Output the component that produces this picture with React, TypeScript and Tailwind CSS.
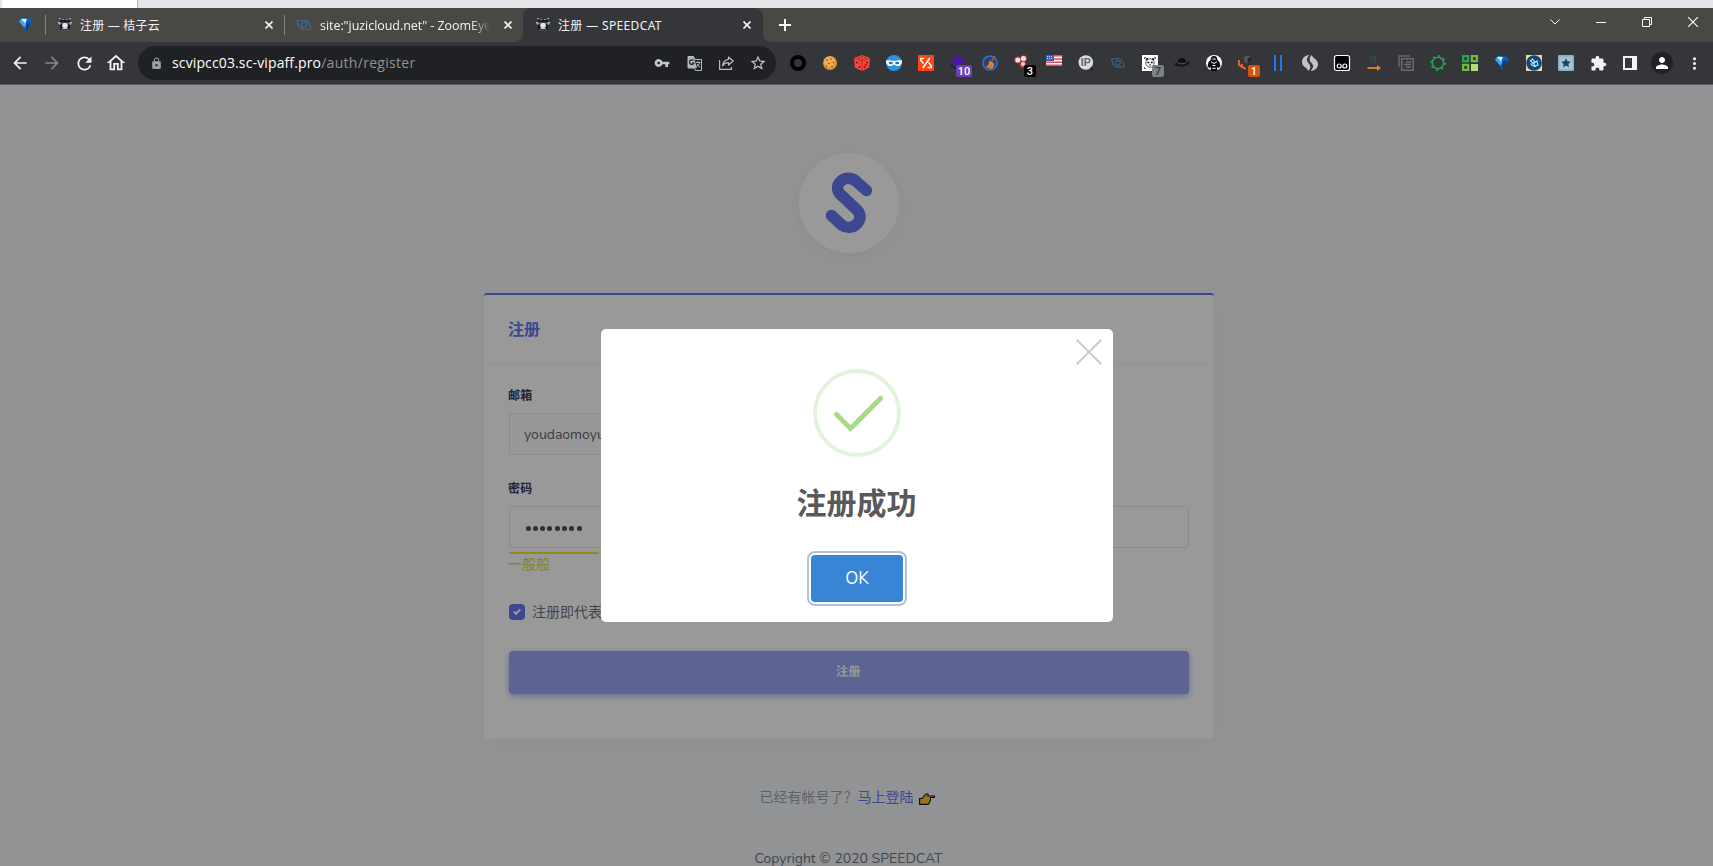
import type { ReactNode } from "react";
import {
  MdArrowBack,
  MdArrowForward,
  MdRefresh,
  MdOutlineHome,
  MdLock,
  MdVpnKey,
  MdStarBorder,
  MdExtension,
  MdPerson,
  MdMoreVert,
} from "react-icons/md";

const Raccoon = () => (
  <svg width="16" height="16" viewBox="0 0 16 16">
    <path d="M3 3h10l.5 4.500-1 5.500h-9l-1-5.500z" fill="#1d1c22" />
    <path d="M2 1h2v1.200H2zM5.500 2h1.500v1H5.500zM9 2h1.500v1H9zM12 1h2v1.200h-2z" fill="#9d98b0" />
    <path d="M.5 5h2.500l1 2-1.500 1zM15.500 5H13l-1 2 1.500 1z" fill="#b5b2bb" />
    <path d="M4 5.500h2.500v1H4zM9.500 5.500H12v1H9.500z" fill="#8a8790" />
    <ellipse cx="8" cy="8.500" rx="2.800" ry="2.800" fill="#e6e6ea" />
    <path d="M6.300 10.500h3.400L11 12H5z" fill="#c9c8ce" />
    <path d="M4 12.500h8v1H4z" fill="#5a5960" />
  </svg>
);

const Gem = () => (
  <svg width="16" height="16" viewBox="0 0 16 16">
    <path d="M1 4.500 3.500 1.500h9L15 4.500 10 10.500 8.500 15h-1L6 10.500z" fill="#0a5cc0" />
    <path d="M1 4.500 3.500 1.500H8V9L6 10.500z" fill="#3aa6f4" />
    <path d="M3.500 2h5.500L7 6.500z" fill="#e6f6ff" />
    <path d="M8.500 8 12.500 4.500 10 10.500 8.500 15z" fill="#063678" />
  </svg>
);

const Orbit = () => (
  <svg width="16" height="16" viewBox="0 0 16 16" fill="none" stroke="#3a6d99" strokeLinecap="round">
    <path d="M1.500 4C4 3 9 2.800 11.500 4.300 13.500 5.500 14 8 15 12M14.500 12C12 13 7 13.200 4.500 11.700 2.500 10.500 2 8 1 4" strokeWidth="1.100" />
    <circle cx="8" cy="8" r="2.700" strokeWidth="1.100" />
  </svg>
);

const Badge = ({ text, tone }: { text: string; tone: string }) => (
  <span
    className={`absolute left-[18px] top-[18px] flex h-3 w-3 items-center justify-center rounded-[2px] font-['Roboto',sans-serif] text-[11px] font-medium leading-none ${tone}`}
  >
    {text}
  </span>
);

const Ext = ({ children, badge }: { children: ReactNode; badge?: ReactNode }) => (
  <div className="relative flex h-8 w-8 shrink-0 items-center justify-center">
    {children}
    {badge}
  </div>
);

const Svg = ({ children }: { children: ReactNode }) => (
  <svg width="16" height="16" viewBox="0 0 16 16" className="overflow-visible">
    {children}
  </svg>
);

function Extensions() {
  return (
    <div className="ml-[6px] flex items-center">
      <Ext>
        <Svg><circle cx="8" cy="8" r="6" fill="none" stroke="#000" strokeWidth="4" /></Svg>
      </Ext>
      <Ext>
        <Svg>
          <circle cx="8" cy="8" r="7" fill="#dc9437" />
          <circle cx="7.500" cy="7" r="5.600" fill="#efae56" />
          <g fill="#7d4514">
            <circle cx="5" cy="5" r=".8" /><circle cx="9" cy="4" r=".7" /><circle cx="11.500" cy="7.500" r=".8" />
            <circle cx="7" cy="8.500" r=".8" /><circle cx="10" cy="11.500" r=".8" /><circle cx="4.500" cy="11" r=".7" />
          </g>
        </Svg>
      </Ext>
      <Ext>
        <Svg>
          <path d="M8 0l8 3-.8 9.500L8 16 .8 12.500 0 3z" fill="#f5483a" />
          <path d="M0 3l8 3L16 3M8 6V16" stroke="#b5261f" strokeWidth=".8" fill="none" />
          <g fill="#6e120e">
            <circle cx="5" cy="2.800" r=".7" /><circle cx="8" cy="1.800" r=".7" /><circle cx="11" cy="2.800" r=".7" /><circle cx="8" cy="4.100" r=".7" />
            <circle cx="3" cy="7.500" r=".9" /><circle cx="5.500" cy="12" r=".9" /><circle cx="10.500" cy="12" r=".9" /><circle cx="13" cy="7.500" r=".9" /><circle cx="11.800" cy="9.800" r=".9" />
          </g>
        </Svg>
      </Ext>
      <Ext>
        <Svg>
          <circle cx="8" cy="8" r="8" fill="#2b93e4" />
          <path d="M0 5.500c3-.6 5 .3 8 .3s5-.9 8-.3c0 4-2 5.500-4.500 5.500-2 0-2.500-1.500-3.500-1.500S6.500 11 4.500 11C2 11 0 9.500 0 5.500z" fill="#fff" />
          <ellipse cx="4.800" cy="8" rx="2" ry="1.200" fill="#2b6ea8" /><ellipse cx="11.200" cy="8" rx="2" ry="1.200" fill="#2b6ea8" />
        </Svg>
      </Ext>
      <Ext>
        <Svg>
          <rect width="16" height="16" rx="1" fill="#ff4713" />
          <path d="M6.200 3.500H2.800v2L5.500 8.500M11.800 3 4.800 13M10.500 7.500l2.700 3v2H9.500" stroke="#fff" strokeWidth="1.500" fill="none" />
        </Svg>
      </Ext>
      <Ext badge={<span className="absolute left-[14px] top-[18px] flex h-3 w-4 items-center justify-center rounded-[2px] bg-[#6b3fb8] font-['Roboto',sans-serif] text-[11px] font-medium leading-none text-white">10</span>}>
        <Svg>
          <path d="M8 0l7.500 6L8 11 .5 6z" fill="#4a16a8" /><path d="M.5 9L8 14l7.500-5v2L8 16 .5 11z" fill="#2c0a6e" />
        </Svg>
      </Ext>
      <Ext>
        <Svg>
          <circle cx="8" cy="8" r="7" fill="#35405a" stroke="#2377d8" strokeWidth="1.600" />
          <path d="M12.300 .5l1.200.8-3 5.200L9 5.700z" fill="#a85a24" />
          <path d="M7.500 5.500l4.500 3c0 3-1 5-3 5.500L3.500 12c2-.8 3.500-3 4-6.500z" fill="#d98a4a" />
          <path d="M7.500 8.500 6 12M9.500 9.500 8 13" stroke="#a5602a" strokeWidth=".8" />
        </Svg>
      </Ext>
      <Ext badge={<Badge text="3" tone="bg-black text-white" />}>
        <Svg>
          <circle cx="3.800" cy="5" r="3.600" fill="#a83238" /><circle cx="9.500" cy="3.500" r="3.600" fill="#a83238" /><circle cx="9" cy="9.500" r="3.600" fill="#a83238" />
          <circle cx="3.800" cy="5" r="2.600" fill="#f2dede" /><circle cx="9.500" cy="3.500" r="2.600" fill="#f2dede" /><circle cx="9" cy="9" r="2.200" fill="#e7c6c6" />
        </Svg>
      </Ext>
      <Ext>
        <Svg>
          <rect width="16" height="11" fill="#f4f4f4" />
          <path d="M0 .8h16M0 4h16M0 7.200h16M0 10.300h16" stroke="#e0504e" strokeWidth="1.400" />
          <rect width="8" height="6" fill="#3b5fb5" />
          <path d="M1 1.500h6M1 3.500h6" stroke="#cbd6f0" strokeDasharray="1 1" />
        </Svg>
      </Ext>
      <Ext>
        <Svg>
          <circle cx="7.800" cy="7.500" r="7.300" fill="#dcdcdc" /><path d="M12.500 12.500l2.500 3" stroke="#222" strokeWidth="1.500" />
          <text x="7.800" y="11.300" textAnchor="middle" fontSize="10.500" fontWeight="700" fontFamily="Liberation Sans, sans-serif" fill="#666">IP</text>
        </Svg>
      </Ext>
      <Ext><Svg><g transform="scale(.9) translate(.8 .8)"><Orbit /></g></Svg></Ext>
      <Ext badge={<Badge text="7" tone="bg-[#7c8085] text-[#3a3b3e]" />}>
        <Svg>
          <rect width="16" height="16" fill="#fff" />
          <path d="M2.500 4V2.500H4M12 2.500h1.500V4M2.500 12v1.500H4" stroke="#333" fill="none" strokeWidth=".8" />
          <circle cx="5" cy="4.200" r="1.300" fill="#222" /><circle cx="11" cy="4.200" r="1.300" fill="#222" />
          <circle cx="8" cy="8" r="4.200" fill="#fff" stroke="#444" strokeWidth=".9" />
          <path d="M5.300 7.500h2M8.700 7.500h2" stroke="#111" strokeWidth="1.700" /><path d="M7 10h2" stroke="#222" />
        </Svg>
      </Ext>
      <Ext>
        <Svg>
          <path d="M4 8c0-3 .8-5 2.500-5L8 3.600 9.500 3C11 3 12 5 12 8z" fill="#101010" />
          <path d="M0 9c1-.8 3-.6 4-1.500h8c1-.3 3-1 4-1.200-.5 3-4 5.200-8 5.200S1 10.800 0 9z" fill="#161616" />
          <path d="M4 8.300c2 .8 6 .8 8-.5" stroke="#555" fill="none" />
        </Svg>
      </Ext>
      <Ext>
        <Svg>
          <circle cx="8" cy="8" r="8" fill="#fff" />
          <path d="M8 1c2.300 0 3.400 1.500 3.400 4l2.100 2 1 4.500-2 1.500-1.500-1 .5 4H4.500l.5-4-1.500 1-2-1.500 1-4.500 2.100-2C4.600 2.500 5.700 1 8 1z" fill="#0c0c0c" />
          <path d="M6.300 4h3.400M5 6.800l3 1.700 3-1.700M6.500 10.500h3M6.300 13.300h3.400" stroke="#fff" fill="none" />
        </Svg>
      </Ext>
      <Ext badge={<Badge text="1" tone="bg-[#d4550f] text-white" />}>
        <Svg>
          <path d="M6 2L9.500.500 13 2v4.500L9.500 8.500 6 6.500z" fill="#585858" /><path d="M9.500 3.500L13 2v4.500L9.500 8.500z" fill="#242424" />
          <path d="M1 5v5l3 2v-3M4 11.500l4 2.500" stroke="#f26322" strokeWidth="1.900" fill="none" />
        </Svg>
      </Ext>
      <Ext>
        <Svg><path d="M5 0v16M11 0v16" stroke="#1f7ae6" strokeWidth="2" /></Svg>
      </Ext>
      <Ext>
        <Svg>
          <path d="M7.500 0C2.500.2 0 3.500 0 7c0 3 2 4.500 4.500 6.500.8.800 1.500 1.500 1.500 2.500C9 14 9 10.500 6.500 8S4.500 3 7.500 0z" fill="#c4c4c4" />
          <path d="M8.500 16c5-.2 7.500-3.500 7.500-7 0-3-2-4.500-4.500-6.500C10.700 1.700 10 1 10 0 7 2 7 5.500 9.500 8s2 5-1 8z" fill="#c4c4c4" />
        </Svg>
      </Ext>
      <Ext>
        <Svg>
          <rect x=".5" y=".5" width="15" height="15" rx="2" fill="#000" stroke="#fff" strokeWidth="1.200" />
          <circle cx="5.200" cy="11" r="2" fill="none" stroke="#fff" strokeWidth="1.200" /><circle cx="10.800" cy="11" r="2" fill="none" stroke="#fff" strokeWidth="1.200" />
        </Svg>
      </Ext>
      <Ext>
        <Svg>
          <path d="M10.500 1H6a2.200 2.200 0 0 0 0 4.500h1V9.500M7 1v8.500M9.500 1v8.500" stroke="#30485a" strokeWidth="1.200" fill="none" />
          <path d="M1.500 13H12" stroke="#e8812a" strokeWidth="1.800" /><path d="M11 10l4 3-4 3z" fill="#e8812a" />
        </Svg>
      </Ext>
      <Ext>
        <Svg>
          <path d="M1 12V1h11" stroke="#666" strokeWidth="1.500" fill="none" /><rect x="3.700" y="3.700" width="11.500" height="11.500" fill="none" stroke="#6c6c6c" strokeWidth="1.500" />
          <path d="M8 7h5M6 9.500h7M8 12h5" stroke="#6c6c6c" strokeWidth="1.300" />
        </Svg>
      </Ext>
      <Ext>
        <Svg>
          <circle cx="8" cy="8" r="5.700" stroke="#25a558" strokeWidth="1.600" fill="none" />
          <circle cx="8" cy="8" r="7.200" stroke="#25a558" strokeWidth="1.600" fill="none" strokeDasharray="1.900 3.755" />
        </Svg>
      </Ext>
      <Ext>
        <Svg>
          <g fill="none" strokeWidth="2.200"><path d="M1.100 1.100h5v5h-5z" stroke="#1ea84c" /><path d="M9.900 1.100h5v5h-5z" stroke="#74b83e" /><path d="M1.100 9.900h5v5h-5z" stroke="#74b83e" /></g>
          <rect x="9" y="9" width="7" height="7" fill="#b4dc7d" />
        </Svg>
      </Ext>
      <Ext><Gem /></Ext>
      <Ext>
        <Svg>
          <rect width="16" height="16" fill="#f3d7a0" /><circle cx="8" cy="8" r="7.800" fill="#0c4a78" />
          <path d="M4.500 6l2-2 2 2.500-1.500 2zM8 8l3-2 1 4-3.500 1zM4.500 8.500C6 10.500 7 11.500 10 11.500" stroke="#cfe6f2" strokeWidth="1.100" fill="none" />
        </Svg>
      </Ext>
      <Ext>
        <Svg>
          <rect width="16" height="16" rx="1" fill="#86aec4" /><rect x="1.500" y="1.500" width="13" height="13" fill="#a4c4d4" />
          <path d="M8 3.300l1.400 3 3.300.4-2.400 2.200.7 3.300L8 10.500l-3 1.700.7-3.300-2.400-2.200 3.300-.4z" fill="#20435c" />
        </Svg>
      </Ext>
      <Ext><MdExtension size={17} color="#f1f3f4" /></Ext>
      <Ext>
        <svg width="14" height="14" viewBox="0 0 14 14"><path d="M0 0h14v14H0zM2 2v10h7V2z" fill="#f1f3f4" fillRule="evenodd" /></svg>
      </Ext>
      <Ext>
        <div className="flex h-[22px] w-[22px] items-center justify-center rounded-full bg-[#202124]"><MdPerson size={18} color="#fff" /></div>
      </Ext>
      <Ext><MdMoreVert size={19} color="#f1f3f4" /></Ext>
    </div>
  );
}

const TabClose = () => (
  <svg width="8" height="8" viewBox="0 0 8 8" stroke="#f0f0f0" strokeWidth="1.700" className="mr-[2px] shrink-0">
    <path d="M.5.500l7 7M7.500.500l-7 7" />
  </svg>
);

function TabStrip() {
  return (
    <div className="flex h-[34px] bg-[#4a4845] font-['Noto_Sans','Noto_Sans_CJK_SC',sans-serif] text-[12px] text-[#f3f3f3]">
      <div className="flex w-[45px] items-center pl-[18px]"><Gem /></div>
      <div className="flex w-[239px] items-center">
        <span className="h-5 w-px bg-[#85837f]" />
        <span className="ml-[11px] flex"><Raccoon /></span>
        <span className="ml-[7px] flex-1 whitespace-nowrap pt-[2px] tracking-[0.2px]">注册 — 桔子云</span>
        <span className="mr-[9px] flex"><TabClose /></span>
      </div>
      <div className="flex w-[239px] items-center">
        <span className="h-5 w-px bg-[#85837f]" />
        <span className="ml-[11px] flex"><Orbit /></span>
        <span className="ml-2 mr-[13px] flex-1 overflow-hidden whitespace-nowrap pt-[2px] font-['Open_Sans','Noto_Sans_CJK_SC',sans-serif] text-[12.500px] tracking-[-0.05px] [mask-image:linear-gradient(to_right,#000_88%,transparent)]">
          site:"juzicloud.net" - ZoomEye
        </span>
        <span className="mr-[9px] flex"><TabClose /></span>
      </div>
      <div className="relative flex w-[240px] items-center rounded-t-lg bg-[#35363a] pl-[12px] pr-[10px]">
        <span className="absolute -left-2 bottom-0 h-2 w-2 bg-[radial-gradient(circle_at_0_0,transparent_7.500px,#35363a_8px)]" />
        <span className="absolute -right-2 bottom-0 h-2 w-2 bg-[radial-gradient(circle_at_100%_0,transparent_7.500px,#35363a_8px)]" />
        <Raccoon />
        <span className="ml-[7px] flex-1 whitespace-nowrap pt-[2px] tracking-[0.35px]">注册 — SPEEDCAT</span>
        <TabClose />
      </div>
      <div className="flex w-[44px] items-center justify-center">
        <svg width="12" height="12" viewBox="0 0 12 12" stroke="#fff" strokeWidth="2"><path d="M6 0v12M0 6h12" /></svg>
      </div>
      <div className="ml-auto flex h-[28px] items-center text-white">
        <span className="flex w-[46px] justify-center"><svg width="10" height="6" viewBox="0 0 10 6" fill="none" stroke="currentColor"><path d="M.5.500 5 5 9.500.5" /></svg></span>
        <span className="flex w-[46px] justify-center"><span className="h-px w-[10px] bg-white" /></span>
        <span className="flex w-[46px] justify-center"><svg width="10" height="10" viewBox="0 0 10 10" fill="none" stroke="currentColor"><path d="M.5 2.500h7v7h-7zM2.500 2.500v-2h7v7h-2" /></svg></span>
        <span className="flex w-[43px] justify-end pr-[15px]"><svg width="10" height="10" viewBox="0 0 10 10" stroke="currentColor" strokeWidth="1.100"><path d="M0 0 10 10M10 0 0 10" /></svg></span>
      </div>
    </div>
  );
}

function Toolbar() {
  return (
    <div className="flex h-[43px] items-center border-b border-[#5c5d60] bg-[#35363a]">
      <div className="flex w-[138px] items-center pl-1 text-[#f1f3f4]">
        <span className="flex w-8 justify-center"><MdArrowBack size={20} /></span>
        <span className="flex w-8 justify-center text-[#85868a]"><MdArrowForward size={20} /></span>
        <span className="flex w-8 justify-center"><MdRefresh size={21} /></span>
        <span className="flex w-8 justify-center"><MdOutlineHome size={22} /></span>
      </div>
      <div className="flex h-[34px] w-[638px] items-center rounded-full bg-[#202124] pl-3 pr-[2px] text-[#c4c7ca]">
        <MdLock size={13} className="text-[#9aa0a6]" />
        <div className="ml-[9px] flex-1 -translate-y-px whitespace-nowrap font-['Open_Sans',sans-serif] text-[14px] tracking-[0.13px] text-[#8f9296]">
          <span className="text-white">scvipcc03.sc-vipaff.pro</span><span className="tracking-[0.3px]">/auth/register</span>
        </div>
        <span className="flex w-8 justify-center"><MdVpnKey size={16} /></span>
        <span className="flex w-8 justify-center">
          <svg width="15" height="15" viewBox="0 0 15 15">
            <path d="M1 .5h5.500l1.500 3h6.500v11H8.500l-1-2.500H1z" fill="none" stroke="#b4b7ba" />
            <path d="M1 0h5.500L10 12H1z" fill="#b4b7ba" />
            <path d="M6.500 4.500A2.300 2.300 0 1 0 7 7H5" stroke="#202124" fill="none" strokeWidth="1.200" />
            <path d="M9 6.500h4.500M11 5v1.500M12.500 6.500c0 2-1.500 3-2.500 4M10 8l3 3.500" stroke="#b4b7ba" fill="none" />
          </svg>
        </span>
        <span className="flex w-8 justify-center">
          <svg width="15" height="14" viewBox="0 0 15 14" fill="none" stroke="#b9bcc0" strokeWidth="1.200">
            <path d="M.6 4v9.400h11.800V11" /><path d="M9.500 1l4.700 4-4.700 4V6.700C7 6.700 5 7.500 3.500 9.800 4 6.500 6 3.700 9.500 3.300z" strokeLinejoin="round" />
          </svg>
        </span>
        <span className="flex w-8 justify-center"><MdStarBorder size={18} /></span>
      </div>
      <Extensions />
    </div>
  );
}

function RegisterPage() {
  return (
    <div className="flex flex-col items-center pr-[15px] pt-[68px] font-['Nunito','Noto_Sans','Noto_Sans_CJK_SC',sans-serif] text-[14px] text-[#6c757d]">
      <div className="flex h-[100px] w-[100px] items-center justify-center rounded-full bg-white shadow-[0_4px_25px_rgba(0,0,0,0.06)]">
        <svg width="100" height="100" viewBox="0 0 100 100" fill="none" stroke="#6777ef" strokeWidth="11.500" strokeLinecap="round" strokeLinejoin="round">
          <path d="M67.500 37.500 57 28.200C47 20 33.500 31 40.500 40.500L58 57C67 66 54 79.500 43 72.200L32.500 62.500" />
        </svg>
      </div>

      <div className="mt-10 h-[446px] w-[730px] rounded-[3px] border-t-2 border-[#6777ef] bg-white shadow-[0_4px_25px_rgba(0,0,0,0.04)]">
        <div className="flex h-[70px] items-center border-b border-[#f6f6fa] px-[24px]">
          <h4 className="text-[16px] font-semibold text-[#6777ef]">注册</h4>
        </div>
        <div className="px-[25px] pt-[22px]">
          <label className="-ml-px flex h-[18px] items-center text-[12px] font-semibold tracking-[0.3px] text-[#34395e]">邮箱</label>
          <div className="mt-2 flex h-[42px] w-[325px] items-center rounded border border-[#e4e6fc] bg-[#fefefe] px-[14px] text-[14px] text-[#5d636a]">
            youdaomoyu
          </div>
          <label className="-ml-px mt-[25px] flex h-[18px] items-center text-[12px] font-semibold tracking-[0.3px] text-[#34395e]">密码</label>
          <div className="mt-2 flex h-[42px] items-center gap-[2.330px] rounded border border-[#e4e6fc] px-[15.500px] pt-[2px]">
            {[0, 1, 2, 3, 4, 5, 6, 7].map((n) => (
              <span key={n} className="h-[5px] w-[5px] rounded-full bg-[#495057]" />
            ))}
          </div>
          <div className="mt-1 h-[2px] w-[90px] bg-[#f0ea2c]" />
          <div className="-ml-px flex h-[21px] items-center text-[#e2dc2e]">一般般</div>
          <div className="mt-[29px] flex h-4 items-center">
            <span className="flex h-4 w-4 items-center justify-center rounded bg-[#6777ef]">
              <svg width="8" height="8" viewBox="0 0 8 8"><path d="M6.564.75l-3.590 3.612-1.538-1.550L0 4.260 2.974 7.250 8 2.193z" fill="#fff" /></svg>
            </span>
            <span className="ml-[7px]">注册即代表</span>
          </div>
          <button className="mt-[31px] flex h-[43px] w-full items-center justify-center rounded bg-[#9ca6f4] pb-px pr-px text-[12px] font-semibold tracking-[0.5px] text-[#fbfbff] shadow-[0_2px_6px_#acb5f6]">
            注册
          </button>
        </div>
      </div>

      <div className="mt-[48px] flex h-5 items-center pr-1 text-[#98a6ad]">
        已经有帐号了？<span className="text-[#6777ef]">马上登陆</span>
        <svg width="16" height="12" viewBox="0 0 16 12" className="ml-[5px] mt-1">
          <path d="M.6 5.500H3L7 1h2v2h6.300v1.500H11.500V7l-1 2.500-1.500 1.900H.6z" fill="#fcc232" stroke="#111" strokeWidth="1.100" />
        </svg>
      </div>
      <div className="mt-[41px] flex h-5 items-center whitespace-nowrap pr-px">Copyright © 2020 SPEEDCAT</div>
    </div>
  );
}

function SuccessDialog() {
  return (
    <div className="absolute inset-0 flex items-start justify-center bg-black/40 pt-[244px]">
      <div className="relative flex h-[293px] w-[512px] flex-col items-center rounded-[5px] bg-white pt-10 font-['Nunito','Noto_Sans','Noto_Sans_CJK_SC',sans-serif]">
        <svg width="26" height="26" viewBox="0 0 26 26" className="absolute right-[11px] top-[10px]" stroke="#cccccc" strokeWidth="2">
          <path d="M.7.700 25.300 25.300M25.300.700.700 25.300" />
        </svg>
        <svg width="88" height="88" viewBox="0 0 88 88" fill="none">
          <circle cx="44" cy="44" r="42" stroke="#e4f4dc" strokeWidth="4" />
          <path d="M23.500 45.500 37.500 59.500 67.500 29.500" stroke="#a5dc86" strokeWidth="5" strokeLinecap="round" />
        </svg>
        <h2 className="mt-[25px] flex h-[45px] items-center text-[30px] font-bold text-[#595959]">注册成功</h2>
        <button className="mt-[28px] flex h-[47px] w-[92px] items-center justify-center rounded-[4px] bg-[#3885d5] pl-px pt-px text-[17px] text-white shadow-[0_0_0_2px_#fff,0_0_0_4px_#adc3d9]">
          OK
        </button>
      </div>
    </div>
  );
}

export default function App() {
  return (
    <div className="flex h-[866px] w-[1713px] flex-col overflow-hidden bg-[#f4f6f9]">
      <div className="flex h-2 shrink-0 bg-[#e3e5e7] pl-[2px]">
        <div className="w-[136px] border-r border-[#b5b7b9] bg-white" />
      </div>
      <header className="shrink-0">
        <TabStrip />
        <Toolbar />
      </header>
      <main className="relative min-h-0 flex-1 overflow-hidden">
        <RegisterPage />
        <SuccessDialog />
      </main>
    </div>
  );
}
